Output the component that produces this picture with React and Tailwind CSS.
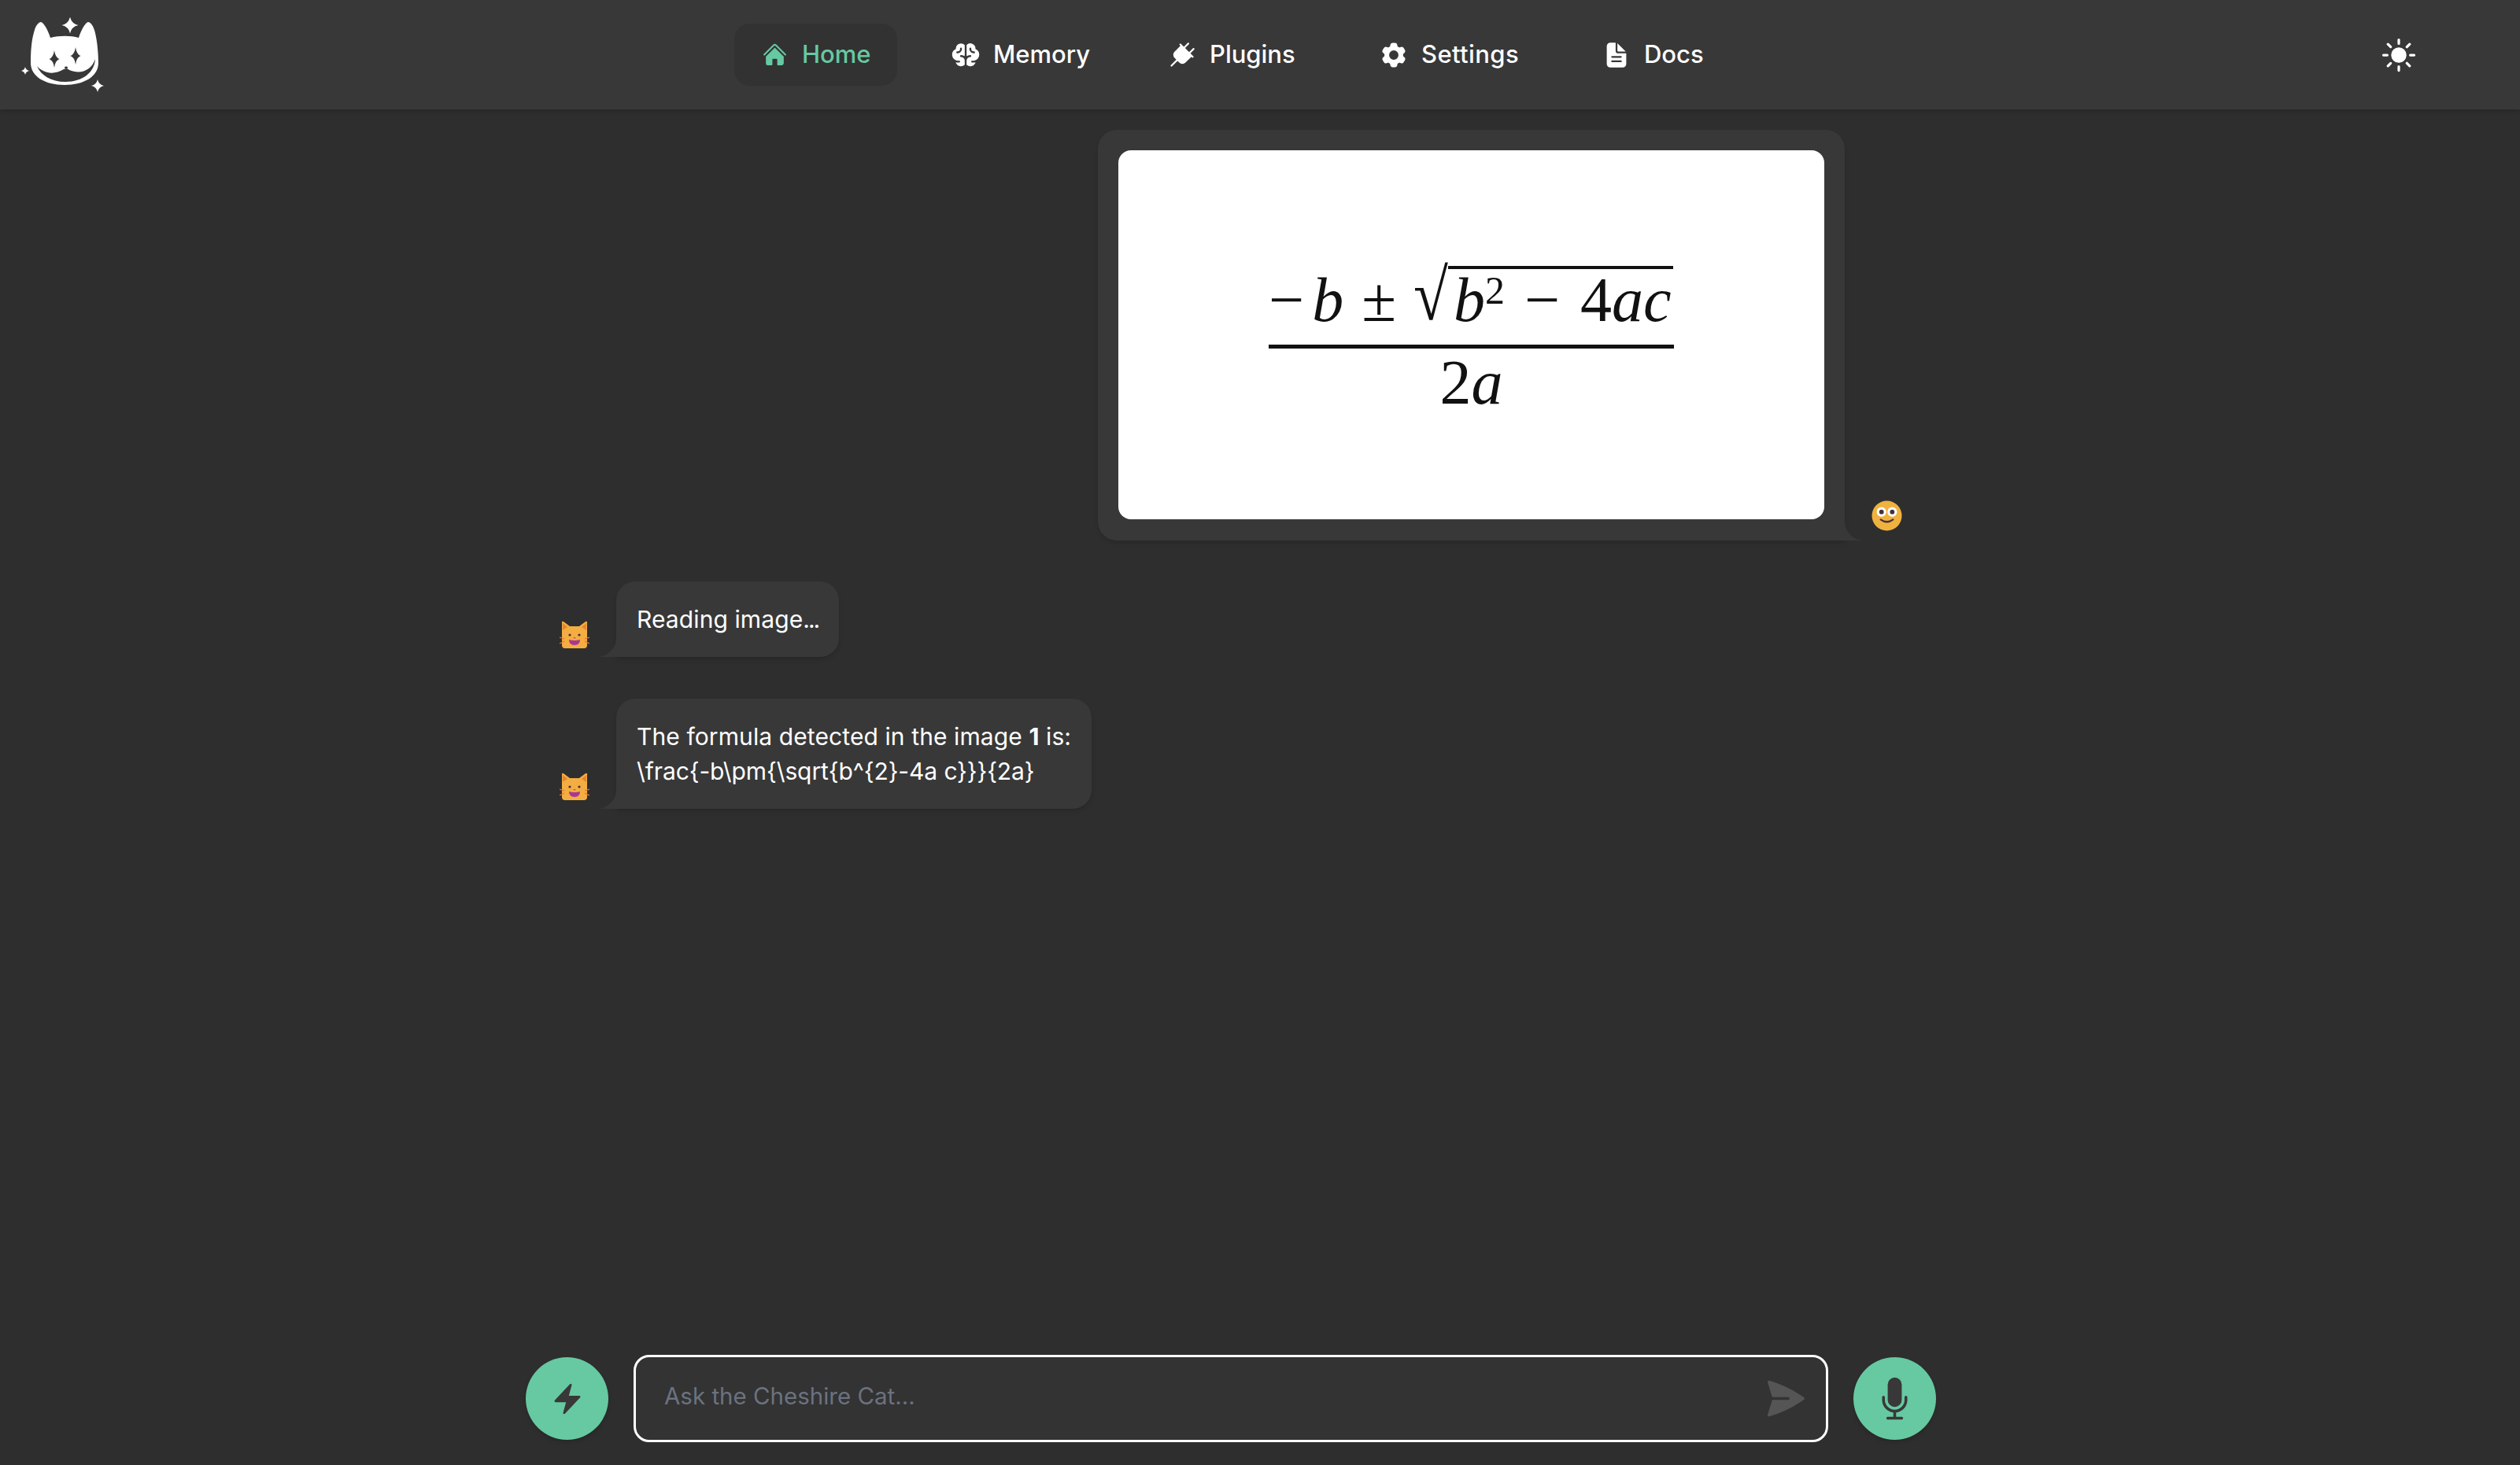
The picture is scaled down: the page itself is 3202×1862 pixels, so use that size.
import { HiHome, HiBolt, HiMicrophone, HiPaperAirplane, HiSun, HiCog6Tooth } from "react-icons/hi2"
import { PiBrainFill, PiPlugFill } from "react-icons/pi"
import { IoDocumentText } from "react-icons/io5"

const font = { fontFamily: "Inter, sans-serif" }

function Sparkle({ cx, cy, rx, ry = rx, fill = "#fff" }) {
  const kx = rx * 0.18
  const ky = ry * 0.18
  return (
    <path
      fill={fill}
      d={`M${cx} ${cy - ry}Q${cx + kx} ${cy - ky} ${cx + rx} ${cy}Q${cx + kx} ${cy + ky} ${cx} ${cy + ry}Q${cx - kx} ${cy + ky} ${cx - rx} ${cy}Q${cx - kx} ${cy - ky} ${cx} ${cy - ry}Z`}
    />
  )
}

function Logo() {
  return (
    <svg viewBox="27 22 105 95" className="h-[95px] w-[105px]">
      <path
        fill="#fff"
        d="M39 80C39 65 40 50 44 38C46 31 50 28 52 28C55 28 61 38 64 48C75 45 90 45 100 48C103 38 109 28 112 28C115 28 119 33 121 42C124 55 125 70 125 80C125 97 107 108 82 108C57 108 39 97 39 80Z"
      />
      <path
        fill="#383838"
        d="M47 84C55 93 68 96 81 88C84 87 86 87 88 89C102 95 116 90 121 75C120 92 105 104 83 104C65 104 52 96 47 84Z"
      />
      <ellipse cx="84" cy="86" rx="2" ry="1.4" fill="#383838" />
      <Sparkle cx={89} cy={32} rx={10.5} ry={10.5} />
      <Sparkle cx={69} cy={75} rx={6.5} ry={11} fill="#383838" />
      <Sparkle cx={96} cy={71} rx={6.5} ry={11} fill="#383838" />
      <Sparkle cx={32} cy={90} rx={5} />
      <Sparkle cx={124} cy={109} rx={8} />
    </svg>
  )
}

function CatEmoji() {
  return (
    <svg viewBox="0 0 38 35" className="h-[35px] w-[38px]">
      <path fill="#f4ad42" d="M3 2Q3 0 5 1L13 7H25L33 1Q35 0 35 2V31Q35 35 31 35H7Q3 35 3 31Z" />
      <path fill="#e5862f" d="M4 3L10 8L4 12ZM34 3L28 8L34 12Z" />
      <circle cx="13" cy="18" r="1.6" fill="#45303a" />
      <circle cx="25" cy="18" r="1.6" fill="#45303a" />
      <path fill="#e0457b" d="M17 21H21L19 23Z" />
      <path fill="#a63a8e" d="M12 24Q19 26 26 24Q26 31 19 31Q12 31 12 24Z" />
      <path stroke="#e5762f" strokeWidth="1.3" fill="none" d="M0 21L6 23M0 29L6 26M38 21L32 23M38 29L32 26" />
    </svg>
  )
}

function FaceEmoji() {
  return (
    <svg viewBox="0 0 40 40" className="h-[39px] w-[39px]">
      <circle cx="20" cy="20" r="19.5" fill="#f0b23f" />
      <circle cx="13" cy="15" r="6.2" fill="#fff" />
      <circle cx="27" cy="15" r="6.2" fill="#fff" />
      <circle cx="13" cy="15" r="3" fill="#45303a" />
      <circle cx="27" cy="15" r="3" fill="#45303a" />
      <path d="M12 25Q20 31 28 25" stroke="#45303a" strokeWidth="2.4" fill="none" strokeLinecap="round" />
    </svg>
  )
}

function NavItem({ icon, label, labelClass, active }) {
  return (
    <a
      className={`flex h-[79px] items-center gap-[19px] rounded-[20px] px-[35px] text-[31px] font-medium ${
        active ? "bg-[#323232] text-[#66c9a2]" : "text-white"
      }`}
    >
      <span className="flex w-[32px] justify-center">{icon}</span>
      <span className={`whitespace-nowrap ${labelClass}`}>{label}</span>
    </a>
  )
}

function BotMessage({ children }) {
  return (
    <div className="flex items-end">
      <div className="mb-[11px] ml-[711px] mr-[34px] w-[38px]">
        <CatEmoji />
      </div>
      <div className="relative rounded-[24px] rounded-bl-none bg-[#383838] p-[26px] text-[30px] leading-[44px] tracking-[0.1px] text-white shadow-md">
        <span className="absolute bottom-0 left-[-25px] h-[24px] w-[25px] bg-[#383838] [clip-path:path('M25_0A25_24_0_0_1_0_24H25Z')]" />
        {children}
      </div>
    </div>
  )
}

function Formula() {
  const serif = { fontFamily: "'Liberation Serif', serif" }
  return (
    <div className="flex h-[469px] w-[897px] flex-col items-center rounded-[16px] bg-white pt-[147px] text-[80px] leading-[74px] text-[#111]" style={serif}>
      <div className="flex h-[100px] w-[515px] items-start whitespace-nowrap italic">
        <span className="mt-[6px] not-italic">−</span>
        <span className="ml-[10px] mt-[6px]">b</span>
        <span className="ml-[23px] mt-[6px] not-italic">±</span>
        <span className="ml-[22px] mt-[6px] origin-bottom scale-y-[1.15] not-italic">√</span>
        <span className="flex items-start border-t-[4px] border-[#111] pl-[7px] pr-[2px] pt-[2px]">
          <span>b</span>
          <span className="text-[50px] leading-[50px] not-italic">2</span>
          <span className="ml-[25px] not-italic">−</span>
          <span className="ml-[26px] not-italic">4</span>
          <span>ac</span>
        </span>
      </div>
      <div className="mb-[6px] h-[5px] w-[515px] bg-[#111]" />
      <div>
        2<span className="italic">a</span>
      </div>
    </div>
  )
}

export default function App() {
  return (
    <div className="flex h-[1862px] w-[3202px] flex-col bg-[#2e2e2e]" style={font}>
      <header className="flex h-[139px] items-center bg-[#383838] pl-[27px] shadow-md">
        <Logo />
        <nav className="ml-[801px] flex items-center gap-[36px]">
          <NavItem active label="Home" labelClass="w-[86px]" icon={<HiHome className="h-[33px] w-[33px] shrink-0" />} />
          <NavItem label="Memory" labelClass="w-[118px]" icon={<PiBrainFill className="h-[38px] w-[38px] shrink-0" />} />
          <NavItem label="Plugins" labelClass="w-[112px]" icon={<PiPlugFill className="h-[36px] w-[36px] shrink-0" />} />
          <NavItem label="Settings" labelClass="w-[126px] tracking-[0.4px]" icon={<HiCog6Tooth className="h-[38px] w-[38px] shrink-0" />} />
          <NavItem label="Docs" labelClass="w-[74px]" icon={<IoDocumentText className="h-[36px] w-[36px] shrink-0" />} />
        </nav>
        <HiSun className="ml-auto mr-[128px] h-[52px] w-[52px] text-white" />
      </header>

      <main className="flex flex-1 flex-col pt-[26px]">
        <div className="flex items-end">
          <div className="relative ml-[1395px] rounded-[24px] rounded-br-none bg-[#383838] p-[26px] pb-[27px] shadow-md">
            <span className="absolute bottom-0 right-[-25px] h-[24px] w-[25px] bg-[#383838] [clip-path:path('M0_0A25_24_0_0_0_25_24H0Z')]" />
            <Formula />
          </div>
          <div className="mb-[12px] ml-[34px]">
            <FaceEmoji />
          </div>
        </div>

        <div className="mt-[52px] flex flex-col gap-[53px]">
          <BotMessage>
            Reading image<span className="tracking-[-2px]">...</span>
          </BotMessage>
          <BotMessage>
            The formula detected in the image <b>1</b> is:
            <br />
            <span className="tracking-[-0.1px]">{"\\frac{-b\\pm{\\sqrt{b^{2}-4a c}}}{2a}"}</span>
          </BotMessage>
        </div>
      </main>

      <footer className="mb-[29px] ml-[668px] flex items-center gap-[32px]">
        <button className="flex h-[105px] w-[105px] items-center justify-center rounded-full bg-[#66c9a2] text-[#383838] shadow-md">
          <HiBolt className="h-[44px] w-[44px]" />
        </button>
        <div className="flex h-[111px] w-[1518px] items-center justify-between rounded-[20px] border-[3px] border-white bg-[#333333] pl-[36px] pr-[23px]">
          <span className="mb-[6px] text-[29.5px] text-[#6b7280]">Ask the Cheshire Cat...</span>
          <HiPaperAirplane className="h-[57px] w-[57px] text-[#555555]" />
        </div>
        <button className="flex h-[105px] w-[105px] items-center justify-center rounded-full bg-[#66c9a2] text-[#383838] shadow-md">
          <HiMicrophone className="h-[57px] w-[57px]" />
        </button>
      </footer>
    </div>
  )
}
